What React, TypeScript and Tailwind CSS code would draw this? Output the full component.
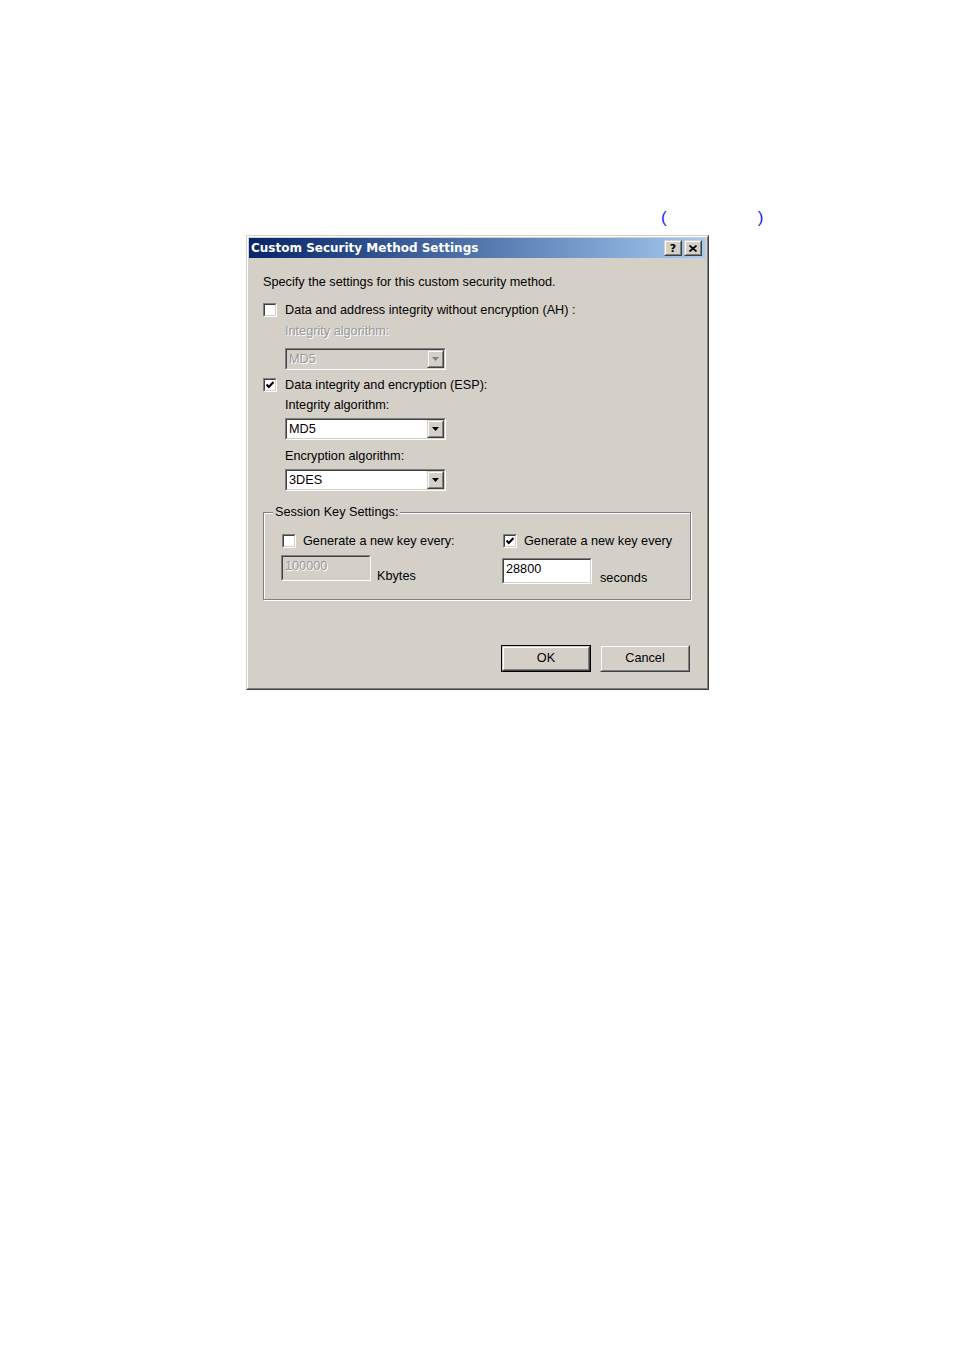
import React from "react";

const font = "font-['Liberation_Sans',Arial,sans-serif]";

function Sunken({ className = "", children }: { className?: string; children?: React.ReactNode }) {
  return (
    <div className={`border border-t-[#808080] border-l-[#808080] border-b-white border-r-white ${className}`}>
      <div className="h-full w-full border border-t-[#404040] border-l-[#404040] border-b-[#d4d0c8] border-r-[#d4d0c8]">
        {children}
      </div>
    </div>
  );
}

function Raised({ className = "", children }: { className?: string; children?: React.ReactNode }) {
  return (
    <div className={`border border-t-[#d4d0c8] border-l-[#d4d0c8] border-b-[#404040] border-r-[#404040] bg-[#d4d0c8] ${className}`}>
      <div className="flex h-full w-full items-center justify-center border border-t-white border-l-white border-b-[#808080] border-r-[#808080]">
        {children}
      </div>
    </div>
  );
}

function Checkbox({ checked }: { checked?: boolean }) {
  return (
    <Sunken className="h-[14px] w-[14px] shrink-0">
      <div className="flex h-full w-full items-center justify-center bg-white">
        {checked && (
          <svg width="8" height="8" viewBox="0 0 8 8">
            <path d="M0.5 3.5 L2.8 6 L7.5 1" stroke="#000" strokeWidth="2.1" fill="none" />
          </svg>
        )}
      </div>
    </Sunken>
  );
}

function Combo({ value, disabled }: { value: string; disabled?: boolean }) {
  return (
    <Sunken className="h-[22px] w-[161px]">
      <div className={`flex h-full w-full items-center ${disabled ? "bg-[#d4d0c8]" : "bg-white"}`}>
        <span className={`flex-1 pl-[2px] text-[12.7px] leading-none ${disabled ? "text-[#999999] [text-shadow:1px_1px_0_#fff]" : "text-black"}`}>{value}</span>
        <Raised className="h-[18px] w-[17px]">
          <svg width="7" height="4" viewBox="0 0 7 4">
            <path d="M0 0 H7 L3.5 4 Z" fill={disabled ? "#808080" : "#000"} />
          </svg>
        </Raised>
      </div>
    </Sunken>
  );
}

export default function App() {
  const disabledText = "text-[#999999]";
  return (
    <div className={`min-h-[1350px] w-[954px] bg-white ${font}`}>
      <div className="flex flex-col pt-[206px]">
        <div className="flex h-[22px] items-center pl-[661px] text-[17px] leading-none text-[#1a1aff]">
          <span>(</span>
          <span className="ml-[91px]">)</span>
        </div>
        <div className="ml-[246px] mt-[7px] h-[455px] w-[463px] border border-t-[#d4d0c8] border-l-[#d4d0c8] border-b-[#404040] border-r-[#404040]">
          <div className="flex h-full w-full flex-col border border-t-white border-l-white border-b-[#808080] border-r-[#808080] bg-[#d4d0c8] p-px">
            {/* Title bar */}
            <div className="mr-px flex h-[20px] items-center bg-gradient-to-r from-[#0a246a] to-[#a6caf0] pl-[2px] pr-[3px]">
              <span className="flex-1 font-['DejaVu_Sans',sans-serif] text-[12px] font-bold leading-none text-white">
                Custom Security Method Settings
              </span>
              <Raised className="h-[16px] w-[18px]">
                <span className="font-['DejaVu_Sans',sans-serif] text-[11px] font-bold leading-none text-black">?</span>
              </Raised>
              <Raised className="ml-[2px] h-[16px] w-[18px]">
                <svg width="8" height="7" viewBox="0 0 8 7">
                  <path d="M0.5 0.5 L7.5 6.5 M7.5 0.5 L0.5 6.5" stroke="#000" strokeWidth="1.7" />
                </svg>
              </Raised>
            </div>

            {/* Content */}
            <div className="flex flex-col pl-[14px] pr-[14px] text-[12.7px] text-black">
              <div className="mt-[16px] h-4 leading-4">Specify the settings for this custom security method.</div>

              <div className="mt-[12px] flex h-4 items-center">
                <Checkbox />
                <span className="ml-[8px] leading-4">Data and address integrity without encryption (AH) :</span>
              </div>
              <div className={`ml-[22px] mt-[5px] h-4 leading-4 ${disabledText} [text-shadow:1px_1px_0_#fff]`}>Integrity algorithm:</div>
              <div className="ml-[22px] mt-[9px]">
                <Combo value="MD5" disabled />
              </div>

              <div className="mt-[7px] flex h-4 items-center">
                <Checkbox checked />
                <span className="ml-[8px] leading-4">Data integrity and encryption (ESP):</span>
              </div>
              <div className="ml-[22px] mt-[4px] h-4 leading-4">Integrity algorithm:</div>
              <div className="ml-[22px] mt-[5px]">
                <Combo value="MD5" />
              </div>
              <div className="ml-[22px] mt-[8px] h-4 leading-4">Encryption algorithm:</div>
              <div className="ml-[22px] mt-[5px]">
                <Combo value="3DES" />
              </div>

              {/* Group box */}
              <div className="relative mt-[21px] h-[88px] w-[428px] border border-[#808080] shadow-[inset_1px_1px_0_#fff,1px_1px_0_#fff]">
                <span className="absolute left-[9px] top-[-9px] bg-[#d4d0c8] px-[2px] leading-4">Session Key Settings:</span>
                <div className="flex pl-[17px] pt-[20px]">
                  <div className="flex w-[221px] flex-col">
                    <div className="ml-[1px] flex h-4 items-center">
                      <Checkbox />
                      <span className="ml-[7px] leading-4">Generate a new key every:</span>
                    </div>
                    <div className="mt-[6px] flex items-end">
                      <Sunken className="h-[26px] w-[90px]">
                        <div className={`h-full w-full pl-[2px] pt-[2px] text-[12.7px] leading-[14px] ${disabledText} [text-shadow:1px_1px_0_#fff]`}>100000</div>
                      </Sunken>
                      <span className="mb-[-3px] ml-[6px] leading-4">Kbytes</span>
                    </div>
                  </div>
                  <div className="flex flex-col">
                    <div className="ml-[1px] flex h-4 items-center">
                      <Checkbox checked />
                      <span className="ml-[7px] leading-4">Generate a new key every</span>
                    </div>
                    <div className="mt-[9px] flex items-end">
                      <Sunken className="h-[26px] w-[90px]">
                        <div className="h-full w-full bg-white pl-[2px] pt-[2px] text-[12.7px] leading-[14px] text-black">28800</div>
                      </Sunken>
                      <span className="mb-[-2px] ml-[8px] leading-4">seconds</span>
                    </div>
                  </div>
                </div>
              </div>

              {/* Buttons */}
              <div className="mt-[45px] flex justify-end pr-[2px]">
                <div className="border border-black">
                  <Raised className="h-[25px] w-[88px]">
                    <span className="leading-none">OK</span>
                  </Raised>
                </div>
                <Raised className="ml-[9px] h-[27px] w-[90px]">
                  <span className="leading-none">Cancel</span>
                </Raised>
              </div>
            </div>
          </div>
        </div>
      </div>
    </div>
  );
}
